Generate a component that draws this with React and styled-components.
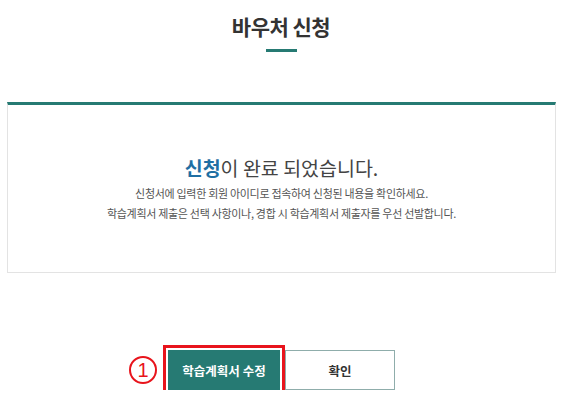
import React from 'react';
import styled, { createGlobalStyle } from 'styled-components';

const GlobalStyle = createGlobalStyle`
  body {
    margin: 0;
    background: #fff;
    font-family: "Noto Sans CJK KR", "Noto Sans", sans-serif;
  }
`;

const Page = styled.div`
  width: 562px;
  display: flex;
  flex-direction: column;
  align-items: center;
`;

const Title = styled.h1`
  margin: 12px 0 0;
  font-size: 21px;
  line-height: 28px;
  font-weight: 700;
  color: #333;
  letter-spacing: -0.5px;
`;

const TitleBar = styled.div`
  width: 31px;
  height: 3px;
  margin-top: 9px;
  background: #267a73;
`;

const Card = styled.div`
  box-sizing: border-box;
  align-self: stretch;
  margin: 50px 6px 0 7px;
  height: 171px;
  border: 1px solid #e3e3e3;
  border-top: 3px solid #267a73;
  padding-top: 50px;
  display: flex;
  flex-direction: column;
  align-items: center;
`;

const Message = styled.p`
  margin: 0 0 2px;
  font-size: 19.5px;
  line-height: 26px;
  color: #444;
  font-weight: 400;
`;

const Strong = styled.strong`
  color: #1f6fa3;
  font-weight: 700;
`;

const Note = styled.p`
  margin: 0;
  font-size: 11px;
  line-height: 20px;
  color: #555;
  letter-spacing: -0.3px;
`;

const ButtonRow = styled.div`
  margin-top: 77px;
  display: flex;
  gap: 5px;
  padding-left: 1px;
`;

const Marked = styled.div`
  position: relative;
  outline: 3px solid #e8141c;
  outline-offset: 2px;
`;

const Badge = styled.span`
  position: absolute;
  right: calc(100% + 11px);
  top: 50%;
  transform: translateY(-50%);
  box-sizing: border-box;
  width: 28px;
  height: 28px;
  border: 2px solid #e8141c;
  border-radius: 50%;
  color: #e8141c;
  font-family: "Liberation Sans", sans-serif;
  font-size: 20px;
  line-height: 24px;
  text-align: center;
`;

const Button = styled.button`
  box-sizing: border-box;
  width: ${p => (p.$primary ? '112px' : '110px')};
  height: 40px;
  border: 1px solid ${p => (p.$primary ? '#267a73' : '#8fadab')};
  background: ${p => (p.$primary ? '#267a73' : '#fff')};
  color: ${p => (p.$primary ? '#fff' : '#333')};
  font-family: "Noto Sans CJK KR", sans-serif;
  font-size: 12.5px;
  font-weight: 700;
  padding: 0;
  cursor: pointer;
  display: block;
`;

export default function App() {
  return (
    <>
      <GlobalStyle />
      <Page>
        <Title>바우처 신청</Title>
        <TitleBar />
        <Card>
          <Message>
            <Strong>신청</Strong>이 완료 되었습니다.
          </Message>
          <Note>신청서에 입력한 회원 아이디로 접속하여 신청된 내용을 확인하세요.</Note>
          <Note>학습계획서 제출은 선택 사항이나, 경합 시 학습계획서 제출자를 우선 선발합니다.</Note>
        </Card>
        <ButtonRow>
          <Marked>
            <Badge>1</Badge>
            <Button $primary>학습계획서 수정</Button>
          </Marked>
          <Button>확인</Button>
        </ButtonRow>
      </Page>
    </>
  );
}
